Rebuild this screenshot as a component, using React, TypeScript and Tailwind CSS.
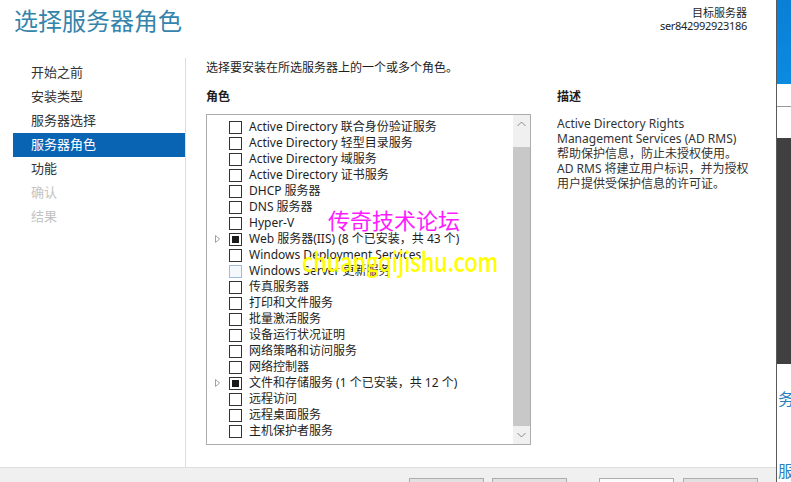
import React from "react";

type Role = { name: string; state?: "none" | "partial"; expandable?: boolean; hover?: boolean };

const roles: Role[] = [
  { name: "Active Directory 联合身份验证服务" },
  { name: "Active Directory 轻型目录服务" },
  { name: "Active Directory 域服务" },
  { name: "Active Directory 证书服务" },
  { name: "DHCP 服务器" },
  { name: "DNS 服务器" },
  { name: "Hyper-V" },
  { name: "Web 服务器(IIS) (8 个已安装，共 43 个)", state: "partial", expandable: true },
  { name: "Windows Deployment Services" },
  { name: "Windows Server 更新服务", hover: true },
  { name: "传真服务器" },
  { name: "打印和文件服务" },
  { name: "批量激活服务" },
  { name: "设备运行状况证明" },
  { name: "网络策略和访问服务" },
  { name: "网络控制器" },
  { name: "文件和存储服务 (1 个已安装，共 12 个)", state: "partial", expandable: true },
  { name: "远程访问" },
  { name: "远程桌面服务" },
  { name: "主机保护者服务" },
];

const navItems = [
  { label: "开始之前", kind: "normal" },
  { label: "安装类型", kind: "normal" },
  { label: "服务器选择", kind: "normal" },
  { label: "服务器角色", kind: "active" },
  { label: "功能", kind: "normal" },
  { label: "确认", kind: "disabled" },
  { label: "结果", kind: "disabled" },
];

const font = { fontFamily: '"Noto Sans", "Noto Sans CJK SC", sans-serif' };

function Checkbox({ state, hover }: { state?: string; hover?: boolean }) {
  return (
    <span
      className={
        "flex h-[13px] w-[13px] shrink-0 items-center justify-center border " +
        (hover ? "border-[#9fbbdc] bg-[#f4f8fd]" : "border-[#333333] bg-white")
      }
    >
      {state === "partial" && <span className="h-[7px] w-[7px] bg-[#1a1a1a]" />}
    </span>
  );
}

function RoleRow({ role }: { role: Role }) {
  return (
    <div className="flex h-4 items-center">
      <span className="flex w-[22px] shrink-0 justify-end pr-[9px]">
        {role.expandable && (
          <svg width="5" height="8" viewBox="0 0 5 8">
            <path d="M0.5 0.5 L4.5 4 L0.5 7.5 Z" fill="none" stroke="#a0a0a0" strokeWidth="1" />
          </svg>
        )}
      </span>
      <Checkbox state={role.state} hover={role.hover} />
      <span className="ml-[7px] whitespace-nowrap text-[12px] leading-4 text-[#1e1e1e]">{role.name}</span>
    </div>
  );
}

function Chevron({ up }: { up?: boolean }) {
  return (
    <svg width="9" height="6" viewBox="0 0 9 6">
      <path d={up ? "M0.5 5 L4.5 1 L8.5 5" : "M0.5 1 L4.5 5 L8.5 1"} fill="none" stroke="#8a8a8a" strokeWidth="1" />
    </svg>
  );
}

export default function App() {
  return (
    <div className="flex h-[482px] w-[791px] overflow-hidden bg-white" style={font}>
      {/* wizard window */}
      <div className="relative flex w-[777px] shrink-0 flex-col border-r border-[#5a5a5a]">
        {/* header */}
        <div className="flex h-[58px] shrink-0 items-start justify-between pl-[14px] pr-[29px]">
          <div className="mt-[5px] text-[24px] leading-[32px] text-[#3584ab]">选择服务器角色</div>
          <div className="mt-[6px] flex flex-col items-end text-[11px] leading-[13px] text-[#1e1e1e]">
            <span>目标服务器</span>
            <span className="tracking-[-0.3px]">ser842992923186</span>
          </div>
        </div>

        {/* body */}
        <div className="flex flex-1">
          <nav className="flex w-[186px] shrink-0 flex-col border-r border-[#dcdcdc] pt-[3px] pb-[10px]">
            {navItems.map((it) => (
              <div
                key={it.label}
                className={
                  "ml-[13px] flex h-6 items-center pl-[18px] text-[13px] " +
                  (it.kind === "active"
                    ? "bg-[#0a64b4] text-white"
                    : it.kind === "disabled"
                    ? "text-[#c3c3c3]"
                    : "text-[#333333]")
                }
              >
                {it.label}
              </div>
            ))}
          </nav>

          <div className="flex flex-1 flex-col pl-[20px] pt-[2px]">
            <div className="text-[12px] leading-[16px] text-[#1e1e1e]">选择要安装在所选服务器上的一个或多个角色。</div>
            <div className="mt-[13px] flex gap-[26px]">
              <div className="flex w-[325px] flex-col">
                <div className="text-[12px] font-bold leading-[16px] text-[#1e1e1e]">角色</div>
                <div className="mt-[9px] flex h-[331px] border border-[#acacac]">
                  <div className="flex flex-1 flex-col pt-[4px]">
                    {roles.map((r) => (
                      <RoleRow key={r.name} role={r} />
                    ))}
                  </div>
                  <div className="flex w-[17px] flex-col bg-[#f0f0f0]">
                    <div className="flex h-[32px] items-start justify-center pt-[6px]">
                      <Chevron up />
                    </div>
                    <div className="flex-1 bg-[#c8c8c8]" />
                    <div className="flex h-[18px] items-center justify-center">
                      <Chevron />
                    </div>
                  </div>
                </div>
              </div>
              <div className="flex w-[200px] flex-col">
                <div className="text-[12px] font-bold leading-[16px] text-[#1e1e1e]">描述</div>
                <div className="mt-[11px] text-[12px] leading-[15px] text-[#333333]">
                  <div>Active Directory Rights</div>
                  <div>Management Services (AD RMS)</div>
                  <div>帮助保护信息，防止未授权使用。</div>
                  <div>AD RMS 将建立用户标识，并为授权</div>
                  <div>用户提供受保护信息的许可证。</div>
                </div>
              </div>
            </div>
          </div>
        </div>

        {/* button bar */}
        <div className="flex h-[15px] shrink-0 items-start border-t border-[#dedede] bg-[#f0f0f0] pt-[10px] pl-[409px]">
          <div className="h-[24px] w-[75px] border border-[#adadad] bg-[#e1e1e1]" />
          <div className="ml-[8px] h-[24px] w-[75px] border border-[#adadad] bg-[#e1e1e1]" />
          <div className="ml-[32px] h-[24px] w-[75px] border border-[#adadad] bg-[#fbfbfb]" />
          <div className="ml-[9px] h-[24px] w-[75px] border border-[#adadad] bg-[#e1e1e1]" />
        </div>

        {/* site watermark */}
        <div
          className="pointer-events-none absolute left-[328px] top-[204px] text-[22px] leading-[30px] text-[#ff1aff]"
          style={{ fontFamily: '"Noto Sans CJK SC", sans-serif' }}
        >
          传奇技术论坛
        </div>
        <div
          className="pointer-events-none absolute left-[302px] top-[242px] origin-top-left scale-y-[1.2] text-[22px] font-medium leading-[30px] tracking-[-0.2px] text-[#ffff00]"
          style={{ fontFamily: '"Noto Sans CJK SC", sans-serif' }}
        >
          chuangqijishu.com
        </div>
      </div>

      {/* window behind */}
      <div className="flex flex-1 flex-col">
        <div className="h-[84px] bg-gradient-to-b from-[#0a7fd6] to-[#0b8be0]" />
        <div className="h-[23px] border-b border-[#9a9a9a] bg-white" />
        <div className="h-[31px] bg-white" />
        <div className="h-[226px] bg-[#404040]" />
        <div className="flex flex-1 flex-col bg-white pt-[24px] text-[16px] leading-[20px] text-[#2a7fc0]" style={{ fontFamily: '"Noto Sans CJK SC", sans-serif' }}>
          <span className="pl-[1px]">务</span>
          <span className="mt-[52px] pl-[1px]">服</span>
        </div>
      </div>
    </div>
  );
}
